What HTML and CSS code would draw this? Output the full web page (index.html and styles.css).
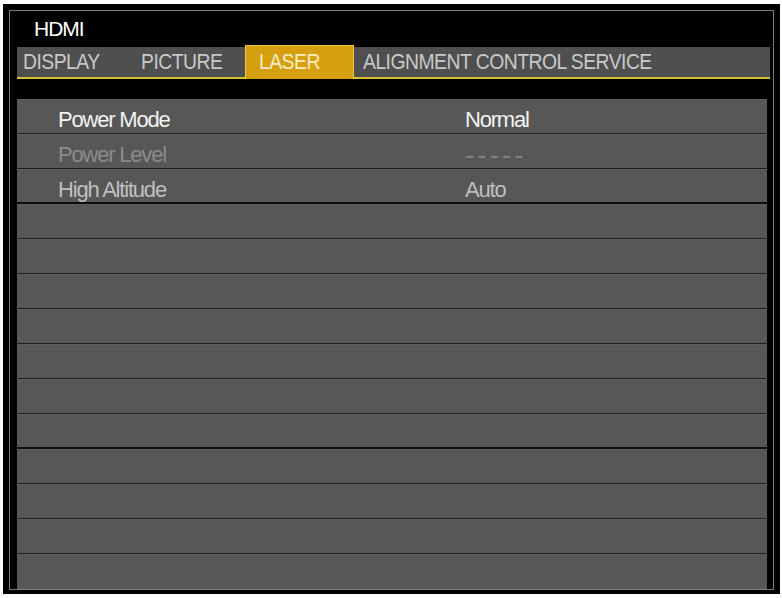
FILE: index.html
```html
<!DOCTYPE html>
<html>
    <head>
        <link rel="stylesheet" href="styles.css">
    </head>
    <body>
        <div class="frame">
            <div class="screen">
                <div class="source">HDMI</div>

                <div class="tabs">
                    <div class="tab tab-display"><span>DISPLAY</span></div>
                    <div class="tab tab-picture"><span>PICTURE</span></div>
                    <div class="tab tab-laser active"><span>LASER</span></div>
                    <div class="tab tab-service"><span>ALIGNMENT CONTROL SERVICE</span></div>
                </div>

                <ul class="menu">
                    <li class="row"><span class="label selected">Power Mode</span><span class="value selected">Normal</span></li>
                    <li class="row"><span class="label disabled">Power Level</span><span class="value dashes">-----</span></li>
                    <li class="row thick"><span class="label">High Altitude</span><span class="value">Auto</span></li>
                    <li class="row"></li>
                    <li class="row"></li>
                    <li class="row"></li>
                    <li class="row"></li>
                    <li class="row"></li>
                    <li class="row"></li>
                    <li class="row thick"></li>
                    <li class="row"></li>
                    <li class="row"></li>
                    <li class="row"></li>
                    <li class="row"></li>
                </ul>
            </div>
        </div>
    </body>
</html>
```

FILE: styles.css
```css
body{
    margin:0px;
    padding:0px;
    background-color:white;
    font-family:"Liberation Sans", Arial, sans-serif;
}

.frame{
    box-sizing:border-box;
    width:777px;
    height:590px;
    margin:4px 0px 0px 3px;
    padding:6px 6px 4px 6px;
    background-color:black;
}

.screen{
    box-sizing:border-box;
    height:100%;
    border:1px solid #7c7c7c;
    padding:0px 3px 0px 7px;
}

.source{
    height:36px;
    line-height:36px;
    padding-left:17px;
    font-size:21px;
    letter-spacing:-1px;
    color:white;
}

/* menu tabs */
.tabs{
    display:flex;
    height:30px;
    background-color:#4f4f4f;
    border-bottom:2px solid #d6c22c;
}

.tab{
    box-sizing:border-box;
    line-height:30px;
    font-size:22px;
    letter-spacing:-0.6px;
    color:#c9c9c9;
    white-space:nowrap;
}
/* the OSD font is condensed, squeeze the labels */
.tab span{
    display:inline-block;
    transform:scaleX(0.88);
    transform-origin:left center;
}
.tab-display{
    width:114px;
    padding-left:6px;
}
.tab-picture{
    width:114px;
    padding-left:10px;
}
.tab-laser{
    width:109px;
    padding-left:13px;
}
.tab-service{
    flex:1;
    padding-left:9px;
}

.tab.active{
    margin-top:-2px;
    margin-bottom:-2px;
    line-height:32px;
    background-color:#d59f0f;
    border:1px solid #ecc94c;
    border-bottom:none;
    color:#f8ecc4;
}

/* setting rows */
.menu{
    list-style:none;
    margin:20px 3px 0px 0px;
    padding:0px;
}

.row{
    display:grid;
    grid-template-columns:407px 1fr;
    box-sizing:border-box;
    height:35px;
    padding:6px 0px 0px 41px;
    line-height:28px;
    background-color:#575757;
    border-top:1px solid #5d5d5d;
    border-bottom:1px solid #1f1f1f;
    font-size:22px;
    letter-spacing:-1.2px;
    color:#bfbfbf;
}
.row.thick{
    border-bottom:2px solid #0e0e0e;
}
.row:last-child{
    border-bottom:none;
}

.selected{
    color:#f2f2f2;
}
.disabled{
    color:#8b8b8b;
}
.dashes{
    font-size:28px;
    letter-spacing:3px;
    color:#808080;
}
```
